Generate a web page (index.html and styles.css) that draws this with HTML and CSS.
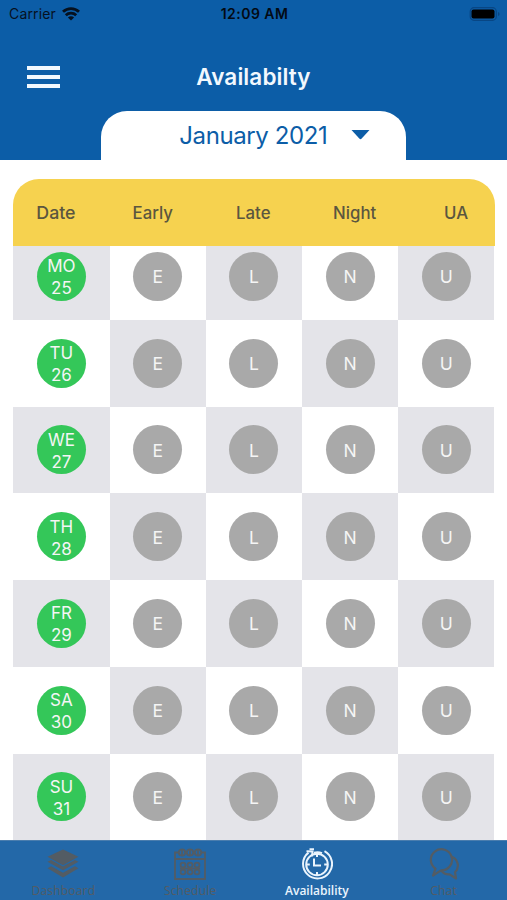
FILE: index.html
```
<!DOCTYPE html>
<html lang="en">
<head>
<meta charset="UTF-8">
<title>Availabilty</title>
<link rel="stylesheet" href="styles.css">
</head>
<body>
<div class="screen">
  <header class="header">
    <div class="status">
      <div class="carrier">
        <span>Carrier</span>
        <svg width="18" height="14" viewBox="0 0 18 14" fill="none" stroke="#06111f" stroke-width="2.8">
          <path d="M1 4.8a11.5 11.5 0 0 1 16 0"/>
          <path d="M3.8 8.2a7.5 7.5 0 0 1 10.4 0"/>
          <path d="M9 13.6L5.9 10.6a4.4 4.4 0 0 1 6.2 0z" fill="#06111f" stroke="none"/>
        </svg>
      </div>
      <span class="time">12:09 AM</span>
      <svg class="battery" width="31" height="14" viewBox="0 0 31 14">
        <rect x="1.2" y=".7" width="26.1" height="12.6" rx="3.8" fill="none" stroke="#084684" stroke-width="1.2"/>
        <rect x="2.5" y="2.5" width="23" height="9" rx="2" fill="#000"/>
        <path d="M29 5v4q1.6-.6 1.6-2T29 5z" fill="#084684"/>
      </svg>
    </div>
    <div class="navbar">
      <button class="menu" aria-label="Menu"><i></i><i></i><i></i></button>
      <h1>Availabilty</h1>
    </div>
    <div class="month">
      <span>January 2021</span>
      <svg width="19" height="10" viewBox="0 0 18 10"><path d="M0 0h18L10.2 8.6q-1.2 1.2-2.4 0z" fill="#0c5da7"/></svg>
    </div>
  </header>

  <main class="table">
    <div class="head">
      <span class="date">Date</span><span>Early</span><span>Late</span><span>Night</span><span>UA</span>
    </div>
    <div class="days">
      <div class="row"><div><b class="day">MO<br>25</b></div><div><b>E</b></div><div><b>L</b></div><div><b>N</b></div><div><b>U</b></div></div>
      <div class="row"><div><b class="day">TU<br>26</b></div><div><b>E</b></div><div><b>L</b></div><div><b>N</b></div><div><b>U</b></div></div>
      <div class="row"><div><b class="day">WE<br>27</b></div><div><b>E</b></div><div><b>L</b></div><div><b>N</b></div><div><b>U</b></div></div>
      <div class="row"><div><b class="day">TH<br>28</b></div><div><b>E</b></div><div><b>L</b></div><div><b>N</b></div><div><b>U</b></div></div>
      <div class="row"><div><b class="day">FR<br>29</b></div><div><b>E</b></div><div><b>L</b></div><div><b>N</b></div><div><b>U</b></div></div>
      <div class="row"><div><b class="day">SA<br>30</b></div><div><b>E</b></div><div><b>L</b></div><div><b>N</b></div><div><b>U</b></div></div>
      <div class="row"><div><b class="day">SU<br>31</b></div><div><b>E</b></div><div><b>L</b></div><div><b>N</b></div><div><b>U</b></div></div>
    </div>
  </main>

  <nav class="tabs">
    <a class="tab">
      <svg width="32" height="32" viewBox="0 0 32 32" fill="currentColor">
        <path d="M16 1.5L31.5 8.8 16 17.2.5 8.8z"/>
        <path d="M.5 13.8l3.6-1.9L16 18.4l11.9-6.5 3.6 1.9L16 22.2z"/>
        <path d="M.5 20.2l3.6-1.9L16 24.8l11.9-6.5 3.6 1.9L16 29.5z"/>
      </svg>
      <span>Dashboard</span>
    </a>
    <a class="tab">
      <svg width="32" height="32" viewBox="0 0 32 32" fill="none" stroke="currentColor" stroke-width="1.8">
        <path d="M5 4.5H1V31h30V4.5h-4M1 11h30"/>
        <circle cx="8" cy="4.5" r="3.2"/><circle cx="16" cy="4.5" r="3.2"/><circle cx="24" cy="4.5" r="3.2"/>
        <path d="M8 2v6M16 2v6M24 2v6"/>
        <circle cx="9" cy="17" r="2.4"/><circle cx="16" cy="17" r="2.4"/><circle cx="23" cy="17" r="2.4"/>
        <circle cx="9" cy="24" r="2.4"/><circle cx="16" cy="24" r="2.4"/><circle cx="23" cy="24" r="2.4"/>
        <path d="M6 20.5h20"/>
      </svg>
      <span>Schedule</span>
    </a>
    <a class="tab active">
      <svg width="32" height="32" viewBox="0 0 32 32" fill="none" stroke="currentColor" stroke-width="2">
        <path d="M23.5 3.2A14.5 14.5 0 1 1 7.5 4.6"/>
        <path d="M5.5 3.2l6 .2-.4 5"/>
        <path d="M8.5 1.2h4.5M13 4.8q4-1.3 8 .4"/>
        <circle cx="16" cy="16.5" r="10.8"/>
        <path d="M13 10.5v7h7"/>
        <path d="M16 5.8v3.2M16 24v3.2M5.2 16.5h3.6M23.2 16.5h3.6"/>
      </svg>
      <span>Availability</span>
    </a>
    <a class="tab">
      <svg width="32" height="32" viewBox="0 0 32 32" fill="none" stroke="currentColor" stroke-width="2.2" stroke-linejoin="round">
        <path d="M7.5 20.6A10.6 10.6 0 1 1 13 22.4L5 27.5z"/>
        <path d="M22.8 8.5A9.3 9.3 0 0 1 27 24.2L28 30.5 21.6 26.3A9.3 9.3 0 0 1 13.2 22.3"/>
      </svg>
      <span>Chat</span>
    </a>
  </nav>
</div>
</body>
</html>
```
FILE: styles.css
```
* {
  box-sizing: border-box;
}

body {
  margin: 0;
  background: #fff;
  font-family: Inter, "Liberation Sans", sans-serif;
}

.screen {
  display: flex;
  flex-direction: column;
  height: 900px;
  overflow: hidden;
}

/* header */
.header {
  display: flex;
  flex-direction: column;
  flex: none;
  height: 159.5px;
  background: #0c5da7;
}

.status {
  display: grid;
  grid-template-columns: 1fr auto 1fr;
  align-items: center;
  height: 28px;
  padding: 0 7px 0 9px;
  font-size: 14px;
  color: #06111f;
}

.carrier {
  display: flex;
  align-items: center;
  gap: 6px;
  letter-spacing: 0.15px;
}

.time {
  font-weight: 600;
  letter-spacing: 0.45px;
  color: #030a14;
}

.battery {
  justify-self: end;
}

.navbar {
  display: grid;
  grid-template-columns: 60px 1fr 60px;
  align-items: center;
  height: 83px;
  padding-top: 15px;
}

.menu {
  display: flex;
  flex-direction: column;
  gap: 5px;
  width: 60px;
  padding: 0 0 0 27px;
  border: 0;
  background: none;
}

.menu i {
  width: 33px;
  height: 4px;
  background: #f2f8fe;
}

.navbar h1 {
  margin: 0;
  font-size: 22.5px;
  font-weight: 600;
  letter-spacing: 0.1px;
  text-align: center;
  color: #f2f8fe;
}

.month {
  display: flex;
  align-items: center;
  align-self: center;
  gap: 24px;
  width: 305.5px;
  height: 49px;
  padding-left: 78.5px;
  border-radius: 26px 26px 0 0;
  background: #fff;
  font-size: 24px;
  letter-spacing: -0.4px;
  color: #0c5da7;
}

/* availability table */
.table {
  flex: 1;
  min-height: 0;
  margin: 19.5px 12.5px 0 13.3px;
  overflow: hidden;
}

.head {
  display: grid;
  grid-template-columns: 96.3px 103.5px 97px 111px auto;
  align-items: center;
  height: 67.3px;
  padding-left: 23px;
  border-radius: 26px 26px 0 0;
  background: #f6d24f;
  font-size: 16.8px;
  font-weight: 500;
  color: #5b563f;
}

.head .date {
  font-size: 17.8px;
}

.row {
  display: grid;
  grid-template-columns: repeat(5, 1fr);
  height: 86.75px;
}

/* the first day starts partly under the head */
.days {
  overflow: hidden;
}

.row:first-child {
  margin-top: -13.3px;
}

.row div {
  display: flex;
  align-items: center;
  justify-content: center;
}

.row:nth-child(odd) div:nth-child(odd),
.row:nth-child(even) div:nth-child(even) {
  background: #e4e4e9;
}

.row b {
  display: flex;
  align-items: center;
  justify-content: center;
  width: 49px;
  height: 49px;
  padding-top: 2px;
  border-radius: 50%;
  background: #a9a9a9;
  font-size: 17.5px;
  font-weight: 400;
  line-height: 22px;
  text-align: center;
  color: #f5f5f5;
}

.row .day {
  background: #34c759;
  font-size: 17px;
}

/* tab bar */
.tabs {
  display: grid;
  grid-template-columns: repeat(4, 1fr);
  flex: none;
  height: 60px;
  border-top: 1px solid #4a7dae;
  background: #2368a8;
}

.tab {
  display: flex;
  flex-direction: column;
  align-items: center;
  gap: 3px;
  padding-top: 7px;
  font-family: "Open Sans", "Noto Sans", sans-serif;
  font-size: 12px;
  font-weight: 500;
  line-height: 15px;
  letter-spacing: 0.2px;
  color: #535c64;
}

.tab.active {
  font-weight: 600;
  letter-spacing: 0;
  color: #eaf4fd;
}
```
